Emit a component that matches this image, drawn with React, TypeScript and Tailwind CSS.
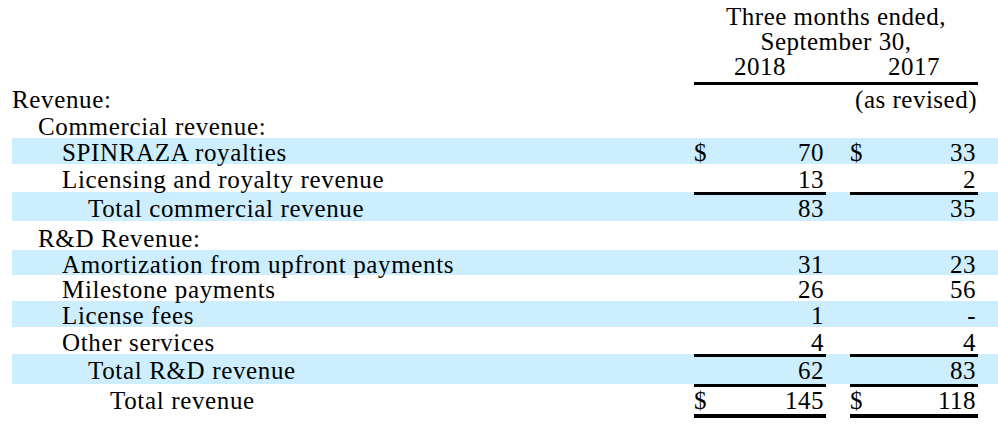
type Row = {
  label: string;
  indent: string;
  a?: string;
  b?: string;
  dollar?: boolean;
  blue?: boolean;
  h: string;
  top?: boolean;
  bottom?: "single" | "double";
  pad?: string;
};

const rows: Row[] = [
  { label: "Commercial revenue:", indent: "pl-[26px]", h: "h-[26px]" },
  { label: "SPINRAZA royalties", indent: "pl-[50px]", a: "70", b: "33", dollar: true, blue: true, h: "h-[26px]" },
  { label: "Licensing and royalty revenue", indent: "pl-[50px]", a: "13", b: "2", h: "h-[28px]" },
  { label: "Total commercial revenue", indent: "pl-[76px]", a: "83", b: "35", blue: true, h: "h-[29px]", top: true },
  { label: "R&D Revenue:", indent: "pl-[26px]", h: "h-[29px]", pad: "pt-[3px]" },
  { label: "Amortization from upfront payments", indent: "pl-[50px]", a: "31", b: "23", blue: true, h: "h-[25px]" },
  { label: "Milestone payments", indent: "pl-[50px]", a: "26", b: "56", h: "h-[26px]" },
  { label: "License fees", indent: "pl-[50px]", a: "1", b: "-", blue: true, h: "h-[26px]" },
  { label: "Other services", indent: "pl-[50px]", a: "4", b: "4", h: "h-[27px]" },
  { label: "Total R&D revenue", indent: "pl-[76px]", a: "62", b: "83", blue: true, h: "h-[30px]", top: true },
  { label: "Total revenue", indent: "pl-[98px]", a: "145", b: "118", dollar: true, h: "h-[34px]", top: true, bottom: "double" },
];

function Cell({ value, dollar, top, bottom, w }: { value?: string; dollar?: boolean; top?: boolean; bottom?: "single" | "double"; w: string }) {
  const border = top ? "border-t-[3px] border-black" : "border-t-[3px] border-transparent";
  const under = bottom === "double" ? "border-b-[4px] border-b-black" : "";
  return (
    <div className={`${w} flex items-center justify-between pr-[2px] ${border} ${under}`}>
      <span>{dollar ? "$" : ""}</span>
      <span>{value ?? ""}</span>
    </div>
  );
}

export default function App() {
  return (
    <div
      className="w-[998px] h-[424px] bg-white text-black text-[25px] leading-[25px] tracking-[0.5px] pl-[12px] overflow-hidden"
      style={{ fontFamily: '"Liberation Serif", "Times New Roman", serif' }}
    >
      {/* Header */}
      <div className="flex h-[86px]">
        <div className="w-[682px]" />
        <div className="w-[284px] flex flex-col pt-[4px]">
          <div className="text-center">Three months ended,</div>
          <div className="text-center">September 30,</div>
          <div className="flex">
            <div className="w-[132px] text-center">2018</div>
            <div className="w-[24px]" />
            <div className="w-[128px] text-center">2017</div>
          </div>
          <div className="mt-[3px] h-[3px] bg-black" />
        </div>
      </div>

      {/* Revenue / as revised */}
      <div className="flex h-[26px] items-center">
        <div className="w-[682px] tracking-[0.65px]">Revenue:</div>
        <div className="w-[132px]" />
        <div className="w-[24px]" />
        <div className="w-[128px] text-right pr-[1px]">(as revised)</div>
      </div>

      {rows.map((r) => (
        <div key={r.label} className={`flex ${r.h} ${r.blue ? "bg-[#cceeff]" : ""}`}>
          <div className={`w-[682px] flex items-center tracking-[0.65px] border-t-[3px] border-transparent ${r.indent} ${r.bottom ? "border-b-[4px] border-b-transparent" : ""} ${r.pad ?? ""}`}>
            {r.label}
          </div>
          <Cell w="w-[132px]" value={r.a} dollar={r.dollar} top={r.top} bottom={r.bottom} />
          <div className="w-[24px]" />
          <Cell w="w-[128px]" value={r.b} dollar={r.dollar} top={r.top} bottom={r.bottom} />
        </div>
      ))}
    </div>
  );
}
